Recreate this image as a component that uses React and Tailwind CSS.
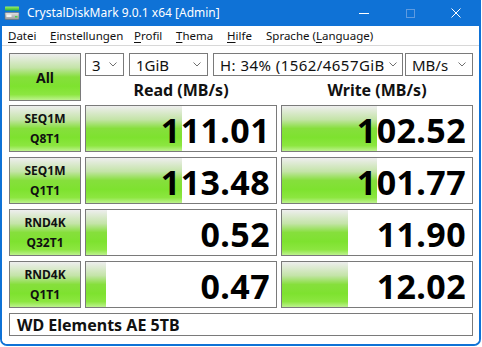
import React from 'react'

const font = { fontFamily: '"Noto Sans", "Liberation Sans", sans-serif' }

const GREEN = 'bg-[linear-gradient(to_bottom,#eeeeee_0%,#c4e4a8_30%,#86df3c_50%,#7ee22f_70%,#8ce640_88%,#bdf28e_100%)]'

const menu = [
  { u: 'D', rest: 'atei', w: 'w-[42px]' },
  { u: 'E', rest: 'instellungen', w: 'w-[84px]' },
  { u: 'P', rest: 'rofil', w: 'w-[42px]' },
  { u: 'T', rest: 'hema', w: 'w-[51px]' },
  { u: 'H', rest: 'ilfe', w: 'w-[39px]' },
]

const rows = [
  { a: 'SEQ1M', b: 'Q8T1', read: '111.01', rw: 96, write: '102.52', ww: 95 },
  { a: 'SEQ1M', b: 'Q1T1', read: '113.48', rw: 96, write: '101.77', ww: 95 },
  { a: 'RND4K', b: 'Q32T1', read: '0.52', rw: 21, write: '11.90', ww: 66 },
  { a: 'RND4K', b: 'Q1T1', read: '0.47', rw: 20, write: '12.02', ww: 66 },
]

const Chevron = () => (
  <svg width="8" height="5" viewBox="0 0 8 5" className="shrink-0">
    <path d="M0.5 0.5 L4 4 L7.5 0.5" fill="none" stroke="#707070" strokeWidth="1" />
  </svg>
)

const Combo = ({ w, wide, children }) => (
  <div className={`${w} h-[23px] bg-white border border-[#7a7a7a] flex items-center pl-[6px] pr-[6px] gap-1`}>
    <span className={`flex-1 whitespace-nowrap text-[15px] leading-[20px] text-[#111] ${wide ? 'tracking-[0.45px]' : ''}`}>{children}</span>
    <Chevron />
  </div>
)

const ResultBox = ({ value, bar }) => (
  <div className="relative w-[192px] h-[47px] border border-[#7a7a7a] bg-white flex items-center justify-end pr-[6px] pt-[3px]">
    <div className={`absolute left-0 top-0 bottom-0 ${GREEN}`} style={{ width: bar }} />
    <span className="relative font-bold text-[34px] leading-none text-black tracking-[0.4px]">{value}</span>
  </div>
)

const DiskIcon = () => (
  <svg width="16" height="16" viewBox="0 0 16 16">
    <defs>
      <linearGradient id="g1" x1="0" y1="0" x2="0" y2="1">
        <stop offset="0" stopColor="#9ef06a" />
        <stop offset="1" stopColor="#2fb52f" />
      </linearGradient>
      <linearGradient id="g2" x1="0" y1="0" x2="0" y2="1">
        <stop offset="0" stopColor="#e4e4e4" />
        <stop offset="1" stopColor="#9a9a9a" />
      </linearGradient>
    </defs>
    <rect x="1" y="1.5" width="14" height="4" rx="0.5" fill="url(#g1)" />
    <rect x="1" y="7.5" width="14" height="7" rx="0.8" fill="url(#g2)" stroke="#707070" strokeWidth="0.6" />
    <rect x="2.5" y="9.5" width="5" height="2.5" fill="#f4f4f4" />
    <rect x="11" y="11" width="2.5" height="1.5" fill="#4cd14c" />
  </svg>
)

export default function App() {
  return (
    <div style={font} className="w-[482px] h-[347px] bg-white">
      <div className="w-[481px] h-[346px] bg-white border-x-2 border-b-2 border-[#0f72d6] rounded-b-[7px] overflow-hidden flex flex-col">
        {/* title bar */}
        <div className="h-[26px] bg-[#0f72d6] flex items-center text-white shrink-0">
          <div className="ml-[2px] w-[16px] flex items-center"><DiskIcon /></div>
          <span className="ml-[7px] text-[12px] leading-[16px]">CrystalDiskMark 9.0.1 x64 [Admin]</span>
          <div className="ml-auto flex items-center h-full">
            <div className="w-[46px] h-full flex items-center justify-center">
              <div className="w-[10px] h-px bg-white" />
            </div>
            <div className="w-[46px] h-full flex items-center justify-center">
              <div className="w-[9px] h-[9px] border border-[#5e9be0]" />
            </div>
            <div className="w-[46px] h-full flex items-center justify-center">
              <svg width="10" height="10" viewBox="0 0 10 10">
                <path d="M0.5 0.5 L9.5 9.5 M9.5 0.5 L0.5 9.5" stroke="white" strokeWidth="1" />
              </svg>
            </div>
          </div>
        </div>

        {/* menu bar */}
        <div className="h-[20px] bg-white flex items-center text-[11.5px] text-[#111] pl-[6px] shrink-0 border-b border-[#d8d8d8]">
          {menu.map(m => (
            <span key={m.u} className={`${m.w} whitespace-nowrap`}>
              <span className="underline underline-offset-2">{m.u}</span>{m.rest}
            </span>
          ))}
          <span className="whitespace-nowrap">
            Sprache (<span className="underline underline-offset-2">L</span>anguage)
          </span>
        </div>

        {/* main */}
        <div className="flex-1 bg-white pl-[7px] pt-[7px]">
          <div className="flex gap-[4px]">
            <button className={`w-[72px] h-[48px] border border-[#7a7a7a] ${GREEN} flex items-center justify-center font-bold text-[14px] text-[#111]`}>
              All
            </button>
            <div className="w-[388px] flex flex-col">
              <div className="flex">
                <Combo w="w-[39px]">3</Combo>
                <div className="w-[5px]" />
                <Combo w="w-[79px]">1GiB</Combo>
                <div className="w-[5px]" />
                <Combo w="w-[190px]" wide>H: 34% (1562/4657GiB</Combo>
                <div className="w-[2px]" />
                <Combo w="w-[68px]">MB/s</Combo>
              </div>
              <div className="flex gap-[4px] h-[25px] items-end pb-[1px]">
                <div className="w-[192px] text-center font-bold text-[16px] leading-[20px] text-[#111]">Read (MB/s)</div>
                <div className="w-[192px] text-center font-bold text-[16px] leading-[20px] text-[#111]">Write (MB/s)</div>
              </div>
            </div>
          </div>

          <div className="flex flex-col gap-[5px] mt-[4px]">
            {rows.map((r, i) => (
              <div key={i} className="flex gap-[4px]">
                <div className={`w-[72px] h-[47px] border border-[#7a7a7a] ${GREEN} flex flex-col items-center justify-center font-bold text-[12px] leading-[20px] text-[#111]`}>
                  <span>{r.a}</span>
                  <span>{r.b}</span>
                </div>
                <ResultBox value={r.read} bar={r.rw} />
                <ResultBox value={r.write} bar={r.ww} />
              </div>
            ))}
            <div className="w-[464px] h-[23px] border border-[#7a7a7a] bg-white flex items-center pl-[7px] font-bold text-[16px] leading-[20px] text-[#111]">
              WD Elements AE 5TB
            </div>
          </div>
        </div>
      </div>
    </div>
  )
}
